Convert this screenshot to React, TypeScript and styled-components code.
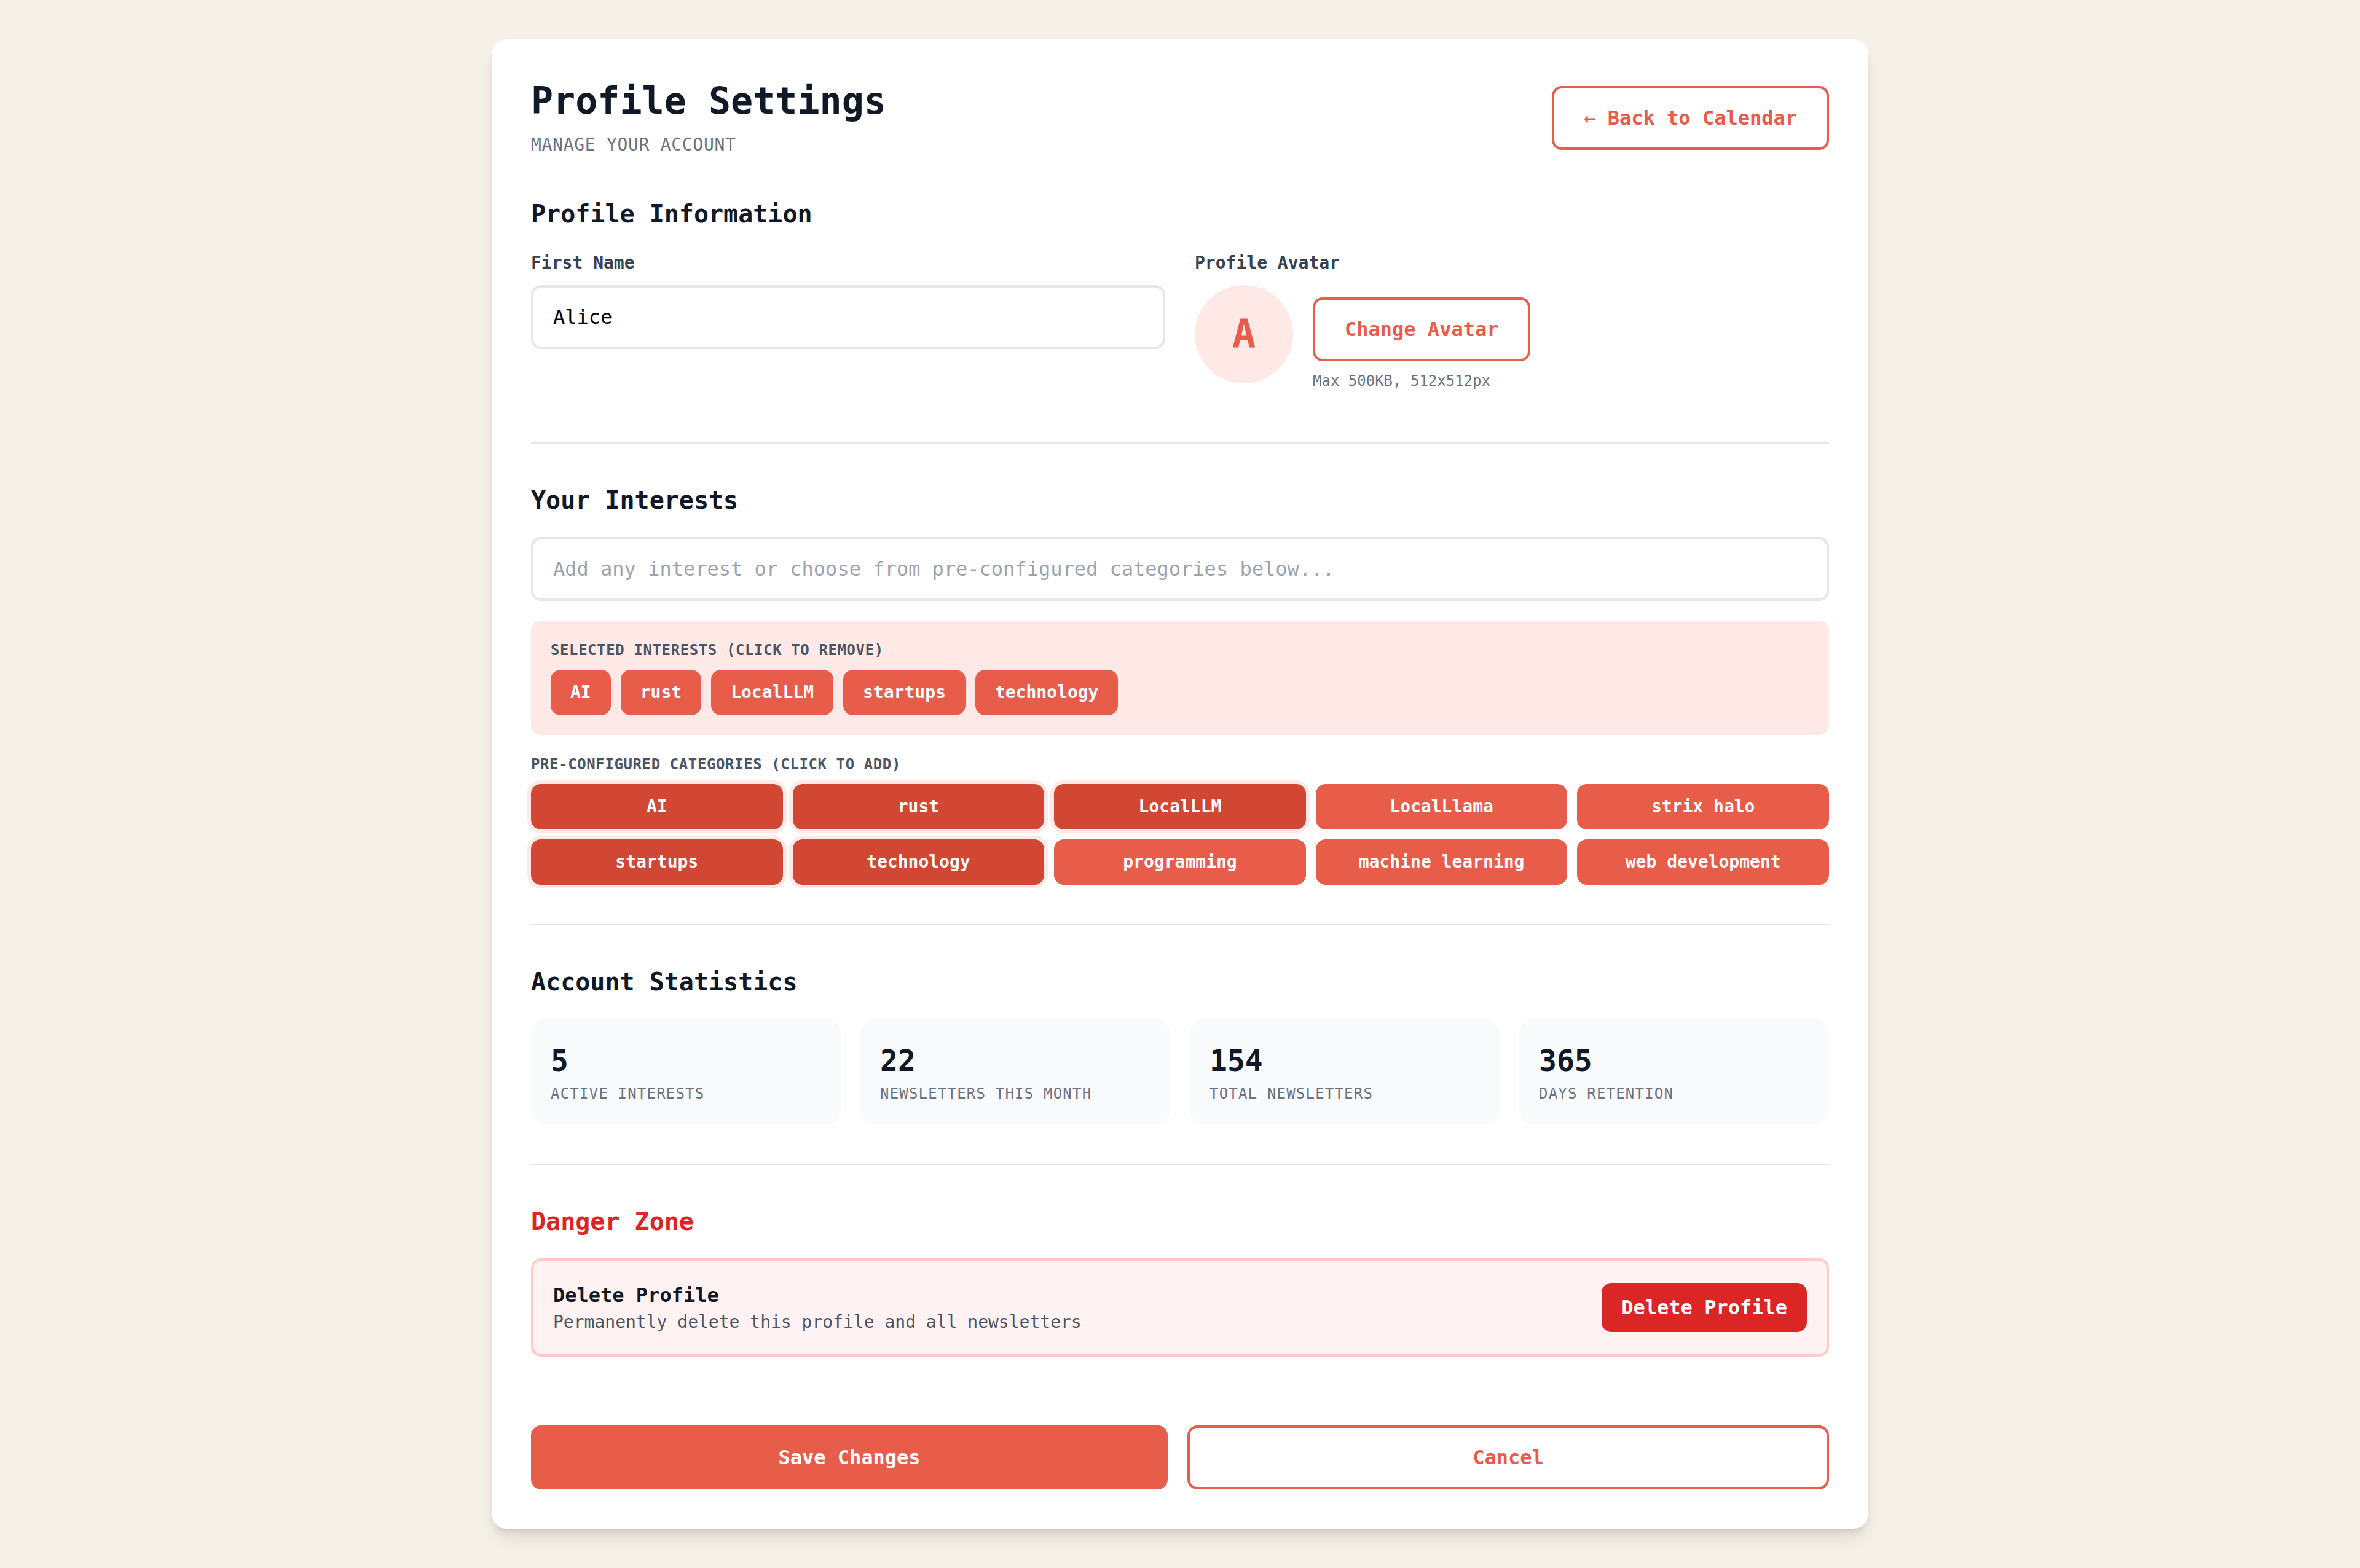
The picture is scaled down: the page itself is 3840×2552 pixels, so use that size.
import React, { useState } from 'react';
import styled, { createGlobalStyle, css } from 'styled-components';

const color = {
  page: '#f5f0e8',
  surface: '#ffffff',
  coral: '#e85d4a',
  coralDark: '#d14733',
  coralTint: '#fee9e6',
  ink: '#111827',
  label: '#374151',
  caption: '#4b5563',
  muted: '#6b7280',
  placeholder: '#9ca3af',
  line: '#e5e7eb',
  panel: '#f9fafb',
  danger: '#dc2626',
  dangerTint: '#fef2f2',
  dangerLine: '#fecaca',
};

const GlobalStyle = createGlobalStyle`
  *, *::before, *::after { box-sizing: border-box; }
  body {
    margin: 0;
    background: ${color.page};
    color: ${color.ink};
    font-family: 'DejaVu Sans Mono', 'Liberation Mono', monospace;
    font-size: 32px;
    line-height: 48px;
  }
  h1, h2, h3, p { margin: 0; }
  button, input { font: inherit; }
`;

const Page = styled.div`
  min-height: 100vh;
  padding: 64px;
`;

const Card = styled.main`
  max-width: 2240px;
  margin: 0 auto;
  padding: 64px;
  background: ${color.surface};
  border-radius: 24px;
  box-shadow: 0 20px 30px -6px rgba(0, 0, 0, 0.1), 0 8px 12px -4px rgba(0, 0, 0, 0.1);
`;

const Header = styled.header`
  display: flex;
  flex-wrap: wrap;
  align-items: center;
  justify-content: space-between;
  gap: 32px;
  margin-bottom: 64px;
`;

const Title = styled.h1`
  margin-bottom: 16px;
  font-size: 60px;
  line-height: 72px;
  font-weight: 700;
`;

const Subtitle = styled.p`
  font-size: 28px;
  line-height: 40px;
  letter-spacing: 0.025em;
  text-transform: uppercase;
  color: ${color.muted};
`;

const Button = styled.button<{ $variant: 'primary' | 'outline' | 'danger' }>`
  padding: 24px 48px;
  border: 0;
  border-radius: 16px;
  font-weight: 600;
  color: #ffffff;
  background: ${color.coral};
  cursor: pointer;

  ${({ $variant }) =>
    $variant === 'outline' &&
    css`
      border: 4px solid ${color.coral};
      color: ${color.coral};
      background: ${color.surface};
    `}

  ${({ $variant }) =>
    $variant === 'danger' &&
    css`
      padding: 16px 32px;
      background: ${color.danger};
    `}
`;

const Section = styled.section<{ $last?: boolean }>`
  margin-bottom: 64px;
  ${({ $last }) =>
    !$last &&
    css`
      padding-bottom: 64px;
      border-bottom: 2px solid ${color.line};
    `}
`;

const SectionTitle = styled.h2<{ $danger?: boolean }>`
  margin-bottom: 32px;
  font-size: 40px;
  line-height: 56px;
  font-weight: 700;
  color: ${({ $danger }) => ($danger ? color.danger : color.ink)};
`;

const FieldGrid = styled.div`
  display: grid;
  grid-template-columns: repeat(auto-fit, minmax(640px, 1fr));
  gap: 48px;
`;

const labelText = css`
  display: block;
  margin-bottom: 16px;
  font-size: 28px;
  line-height: 40px;
  font-weight: 600;
  color: ${color.label};
`;

const FieldLabel = styled.label`
  ${labelText}
`;

const FieldCaption = styled.div`
  ${labelText}
`;

const TextInput = styled.input`
  display: block;
  width: 100%;
  height: 104px;
  padding: 0 32px;
  border: 4px solid ${color.line};
  border-radius: 16px;
  color: #000000;
  background: ${color.surface};
  &::placeholder {
    color: ${color.placeholder};
    opacity: 1;
  }
`;

const AvatarRow = styled.div`
  display: flex;
  align-items: flex-start;
  gap: 32px;
`;

const Avatar = styled.div`
  display: flex;
  flex: none;
  align-items: center;
  justify-content: center;
  width: 160px;
  height: 160px;
  border-radius: 50%;
  font-size: 64px;
  line-height: 80px;
  font-weight: 700;
  color: ${color.coral};
  background: ${color.coralTint};
`;

const AvatarControls = styled.div`
  padding: 20px 0;
`;

const Hint = styled.p`
  margin-top: 16px;
  font-size: 24px;
  line-height: 32px;
  color: ${color.muted};
`;

const GroupLabel = styled.h3`
  margin-bottom: 16px;
  font-size: 24px;
  line-height: 32px;
  font-weight: 600;
  letter-spacing: 0.025em;
  text-transform: uppercase;
  color: ${color.caption};
`;

const SelectedPanel = styled.div`
  margin: 32px 0;
  padding: 32px;
  border-radius: 16px;
  background: ${color.coralTint};
`;

const TagList = styled.div`
  display: flex;
  flex-wrap: wrap;
  gap: 16px;
`;

const CategoryGrid = styled.div`
  display: grid;
  grid-template-columns: repeat(auto-fit, minmax(360px, 1fr));
  gap: 16px;
`;

const Tag = styled.button<{ $active?: boolean }>`
  padding: 16px 32px;
  border: 0;
  border-radius: 16px;
  font-size: 28px;
  line-height: 42px;
  font-weight: 600;
  color: #ffffff;
  background: ${({ $active }) => ($active ? color.coralDark : color.coral)};
  box-shadow: ${({ $active }) => ($active ? `0 0 0 6px ${color.coralTint}` : 'none')};
  cursor: pointer;
`;

const StatGrid = styled.div`
  display: grid;
  grid-template-columns: repeat(auto-fit, minmax(440px, 1fr));
  gap: 32px;
`;

const Stat = styled.div`
  padding: 32px;
  border-radius: 24px;
  background: ${color.panel};
`;

const StatValue = styled.div`
  font-size: 48px;
  line-height: 72px;
  font-weight: 700;
`;

const StatLabel = styled.div`
  font-size: 24px;
  line-height: 36px;
  letter-spacing: 0.05em;
  text-transform: uppercase;
  color: ${color.muted};
`;

const DangerBox = styled.div`
  display: flex;
  align-items: center;
  justify-content: space-between;
  gap: 32px;
  padding: 32px;
  border: 4px solid ${color.dangerLine};
  border-radius: 16px;
  background: ${color.dangerTint};
`;

const DangerTitle = styled.h3`
  font-size: 32px;
  line-height: 48px;
  font-weight: 600;
`;

const DangerText = styled.p`
  font-size: 28px;
  line-height: 40px;
  color: ${color.caption};
`;

const Actions = styled.div`
  display: flex;
  gap: 32px;
  padding-top: 48px;
  & > button {
    flex: 1;
  }
`;

const categories = [
  'AI',
  'rust',
  'LocalLLM',
  'LocalLlama',
  'strix halo',
  'startups',
  'technology',
  'programming',
  'machine learning',
  'web development',
];

export default function App() {
  const [name, setName] = useState('Alice');
  const [draft, setDraft] = useState('');
  const [selected, setSelected] = useState(['AI', 'rust', 'LocalLLM', 'startups', 'technology']);

  const toggle = (item: string) =>
    setSelected((list) => (list.includes(item) ? list.filter((i) => i !== item) : [...list, item]));

  const addDraft = (event: React.KeyboardEvent<HTMLInputElement>) => {
    const value = draft.trim();
    if (event.key !== 'Enter' || !value) return;
    if (!selected.includes(value)) setSelected([...selected, value]);
    setDraft('');
  };

  const stats = [
    { value: selected.length, label: 'Active Interests' },
    { value: 22, label: 'Newsletters This Month' },
    { value: 154, label: 'Total Newsletters' },
    { value: 365, label: 'Days Retention' },
  ];

  return (
    <>
      <GlobalStyle />
      <Page>
        <Card>
          <Header>
            <div>
              <Title>Profile Settings</Title>
              <Subtitle>Manage your account</Subtitle>
            </div>
            <Button type="button" $variant="outline">← Back to Calendar</Button>
          </Header>

          <Section>
            <SectionTitle>Profile Information</SectionTitle>
            <FieldGrid>
              <div>
                <FieldLabel htmlFor="first-name">First Name</FieldLabel>
                <TextInput
                  id="first-name"
                  type="text"
                  value={name}
                  onChange={(e) => setName(e.target.value)}
                />
              </div>
              <div>
                <FieldCaption>Profile Avatar</FieldCaption>
                <AvatarRow>
                  <Avatar>{name.charAt(0).toUpperCase()}</Avatar>
                  <AvatarControls>
                    <Button type="button" $variant="outline">Change Avatar</Button>
                    <Hint>Max 500KB, 512x512px</Hint>
                  </AvatarControls>
                </AvatarRow>
              </div>
            </FieldGrid>
          </Section>

          <Section>
            <SectionTitle id="interests-title">Your Interests</SectionTitle>
            <TextInput
              type="text"
              aria-labelledby="interests-title"
              placeholder="Add any interest or choose from pre-configured categories below..."
              value={draft}
              onChange={(e) => setDraft(e.target.value)}
              onKeyDown={addDraft}
            />
            <SelectedPanel>
              <GroupLabel>Selected interests (click to remove)</GroupLabel>
              <TagList>
                {selected.map((item) => (
                  <Tag key={item} type="button" onClick={() => toggle(item)}>{item}</Tag>
                ))}
              </TagList>
            </SelectedPanel>
            <GroupLabel>Pre-configured categories (click to add)</GroupLabel>
            <CategoryGrid>
              {categories.map((item) => (
                <Tag
                  key={item}
                  type="button"
                  aria-pressed={selected.includes(item)}
                  $active={selected.includes(item)}
                  onClick={() => toggle(item)}
                >
                  {item}
                </Tag>
              ))}
            </CategoryGrid>
          </Section>

          <Section>
            <SectionTitle>Account Statistics</SectionTitle>
            <StatGrid>
              {stats.map((stat) => (
                <Stat key={stat.label}>
                  <StatValue>{stat.value}</StatValue>
                  <StatLabel>{stat.label}</StatLabel>
                </Stat>
              ))}
            </StatGrid>
          </Section>

          <Section $last>
            <SectionTitle $danger>Danger Zone</SectionTitle>
            <DangerBox>
              <div>
                <DangerTitle>Delete Profile</DangerTitle>
                <DangerText>Permanently delete this profile and all newsletters</DangerText>
              </div>
              <Button type="button" $variant="danger">Delete Profile</Button>
            </DangerBox>
          </Section>

          <Actions>
            <Button type="button" $variant="primary">Save Changes</Button>
            <Button type="button" $variant="outline">Cancel</Button>
          </Actions>
        </Card>
      </Page>
    </>
  );
}
